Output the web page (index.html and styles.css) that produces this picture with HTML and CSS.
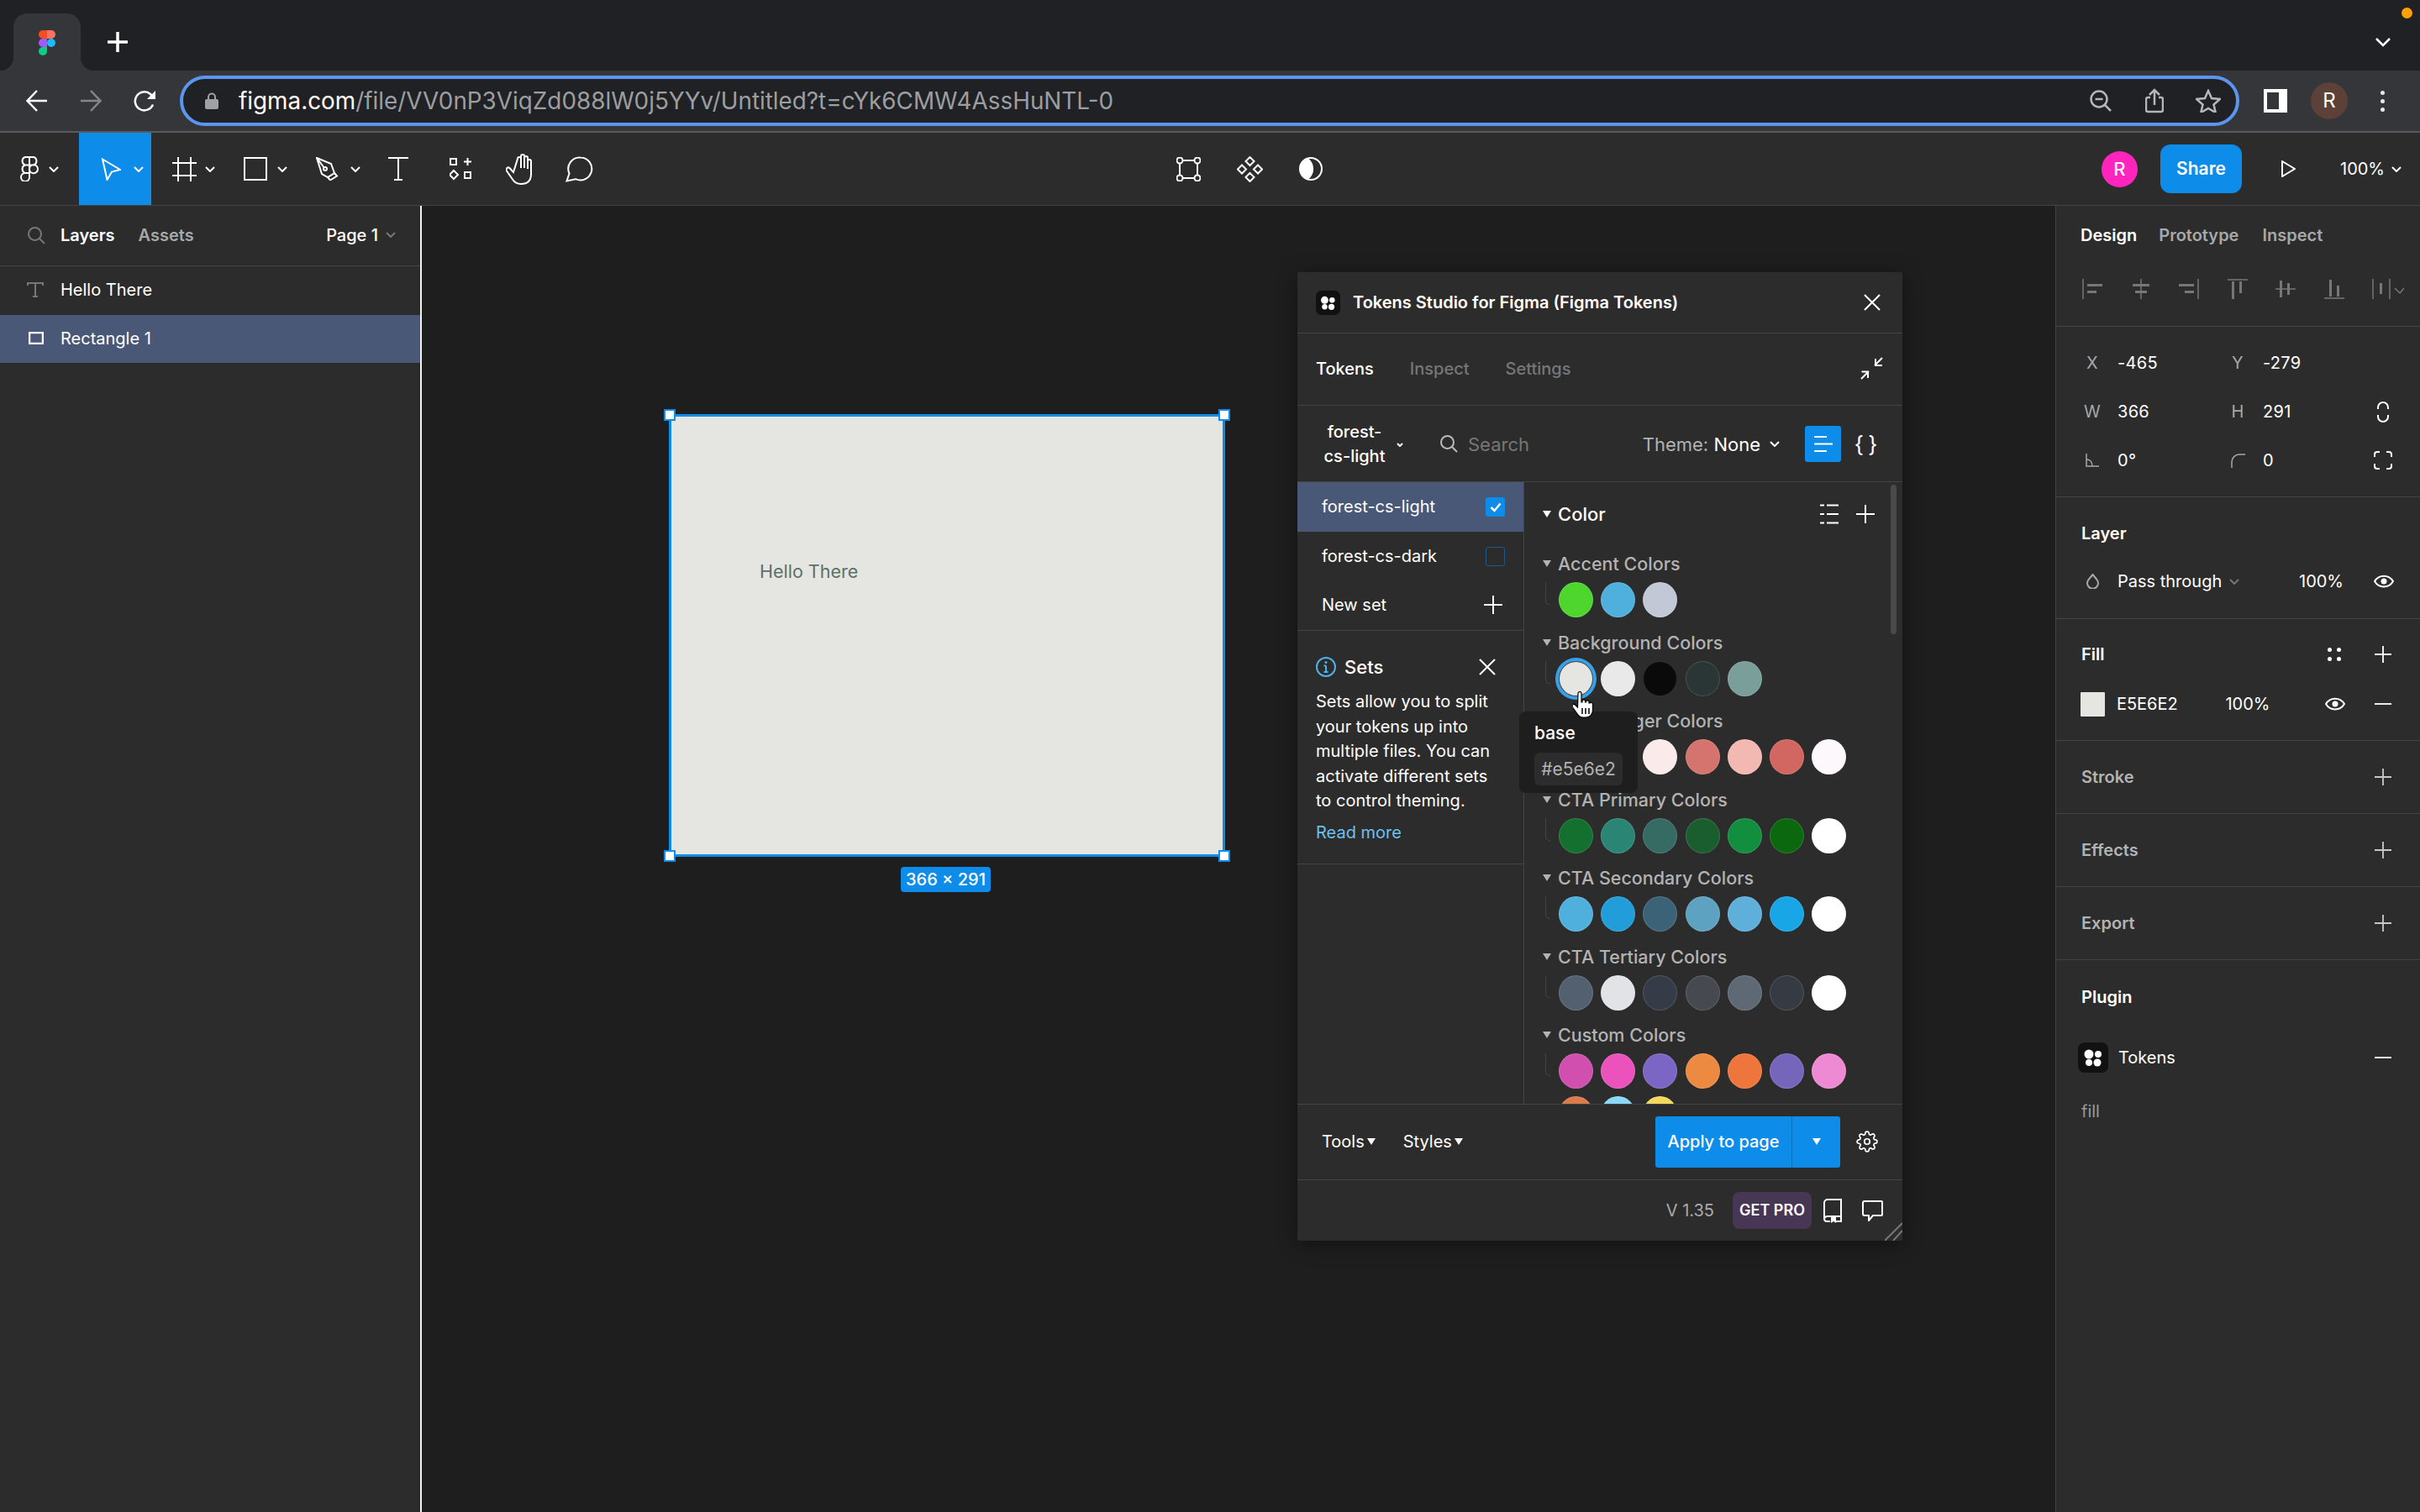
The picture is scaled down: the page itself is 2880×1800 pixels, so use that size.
FILE: index.html
```html
<!DOCTYPE html>
<html lang="en">
<head>
<meta charset="utf-8">
<title>Figma</title>
<link rel="stylesheet" href="styles.css">
</head>
<body>
<svg class="sprite" aria-hidden="true">
  <symbol id="plus" viewBox="0 0 22 22"><path d="M11 0v22M0 11h22"/></symbol>
  <symbol id="minus" viewBox="0 0 22 22"><path d="M0 11h22"/></symbol>
  <symbol id="close" viewBox="0 0 20 20"><path d="M1 1l18 18M19 1L1 19"/></symbol>
  <symbol id="chev" viewBox="0 0 12 7"><path d="M1 1l5 5 5-5"/></symbol>
  <symbol id="eye" viewBox="0 0 24 16"><path d="M1 8c5-8.500 17-8.500 22 0-5 8.500-17 8.500-22 0z"/><circle class="solid" cx="12" cy="8" r="3.500"/></symbol>
  <symbol id="tokens" viewBox="0 0 36 36"><rect class="blackbox" width="36" height="36" rx="8"/><circle class="whitefill" cx="13" cy="14" r="5.500"/><circle class="whitefill" cx="24" cy="14" r="4"/><circle class="whitefill" cx="13" cy="24" r="4"/><circle class="whitefill" cx="23" cy="24" r="4.500"/></symbol>
</svg>

<header class="tabstrip">
  <div class="tab">
    <svg class="fav" viewBox="0 0 20 30"><path fill="#f24e1e" d="M0 5a5 5 0 0 1 5-5h5v10H5a5 5 0 0 1-5-5"/><path fill="#ff7262" d="M10 0h5a5 5 0 0 1 0 10h-5z"/><path fill="#a259ff" d="M0 15a5 5 0 0 1 5-5h5v10H5a5 5 0 0 1-5-5"/><circle fill="#1abcfe" cx="15" cy="15" r="5"/><path fill="#0acf83" d="M0 25a5 5 0 0 1 5-5h5v5a5 5 0 0 1-10 0"/></svg>
  </div>
  <svg class="newtab" viewBox="0 0 24 24"><path d="M12 0v24M0 12h24"/></svg>
  <div class="tabstrip-right">
    <span class="orange-dot"></span>
    <svg class="tablist" viewBox="0 0 18 11"><path d="M1 1l8 8 8-8"/></svg>
  </div>
</header>

<nav class="navbar">
  <svg class="nav-icon back" viewBox="0 0 26 26"><path d="M25 13H2M13 1L1.500 13 13 25"/></svg>
  <svg class="nav-icon fwd" viewBox="0 0 26 26"><path d="M1 13h23M13 1l11.500 12L13 25"/></svg>
  <svg class="nav-icon reload" viewBox="0 0 27 26"><path d="M23 17.500A11 11 0 1 1 20 5l4 4"/><path class="solid" d="M26 1v10H16z"/></svg>
  <div class="urlbar">
    <svg class="lock" viewBox="0 0 16 20"><path class="lockshackle" d="M4 9V5.500a4 4 0 0 1 8 0V9"/><rect class="lockbody" y="8" width="16" height="12" rx="2"/></svg>
    <span class="url"><span class="url-host">figma.com</span>/file/VV0nP3ViqZd088lW0j5YYv/Untitled?t=cYk6CMW4AssHuNTL-0</span>
    <svg class="url-icon zoomout" viewBox="0 0 26 26"><circle cx="11" cy="11" r="9.500"/><path d="M6.500 11h9M18 18l7 7"/></svg>
    <svg class="url-icon share" viewBox="0 0 22 30"><path d="M11 20V2M5 8l6-6 6 6M6 11H3a2 2 0 0 0-2 2v13a2 2 0 0 0 2 2h16a2 2 0 0 0 2-2V13a2 2 0 0 0-2-2h-3"/></svg>
    <svg class="url-icon star" viewBox="0 0 30 28"><path d="M15 2l4 9 10 1-7.500 6.500 2.200 9.500-8.700-5-8.700 5 2.200-9.500L1 12l10-1z"/></svg>
  </div>
  <svg class="sidepanel" viewBox="0 0 28 28"><rect class="whitefill" width="28" height="28"/><rect class="panelhole" x="4" y="4" width="14" height="20"/></svg>
  <span class="profile">R</span>
  <span class="kebab"><i></i><i></i><i></i></span>
</nav>

<div class="toolbar">
  <div class="tool tool-logo">
    <svg class="ti ti-logo" viewBox="0 0 22 30"><path d="M11 1H6a5 5 0 0 0 0 9.500h5zM11 1h5a5 5 0 0 1 0 9.500h-5zM11 10.500H6a5 5 0 0 0 0 9.500h5zM11 20H6a5 5 0 1 0 5 5zM21 15.200a5 5 0 1 1-10 0 5 5 0 0 1 10 0z"/></svg>
    <svg class="chev"><use href="#chev"/></svg>
  </div>
  <div class="tool tool-move">
    <svg class="ti ti-cursor" viewBox="0 0 24 27"><path d="M2 1.500L23 14l-10 2.500L7.500 26z"/></svg>
    <svg class="chev"><use href="#chev"/></svg>
  </div>
  <div class="tool tool-frame">
    <svg class="ti ti-frame" viewBox="0 0 29 29"><path d="M7 0v29M22 0v29M0 7h29M0 22h29"/></svg>
    <svg class="chev"><use href="#chev"/></svg>
  </div>
  <div class="tool tool-rect">
    <svg class="ti ti-rect" viewBox="0 0 28 28"><rect x="1" y="1" width="26" height="26"/></svg>
    <svg class="chev"><use href="#chev"/></svg>
  </div>
  <div class="tool tool-pen">
    <svg class="ti ti-pen" viewBox="0 0 28 28"><path d="M1 1l17 7 4 11-8 5-7-4zM1 1l9 12M14 24l3 3.500 8-5-3-3.500"/><circle cx="11" cy="14" r="2"/></svg>
    <svg class="chev"><use href="#chev"/></svg>
  </div>
  <div class="tool tool-text">
    <svg class="ti ti-t" viewBox="0 0 24 28"><path d="M0 1h24M12 1v26M7 27h10"/></svg>
  </div>
  <div class="tool tool-res">
    <svg class="ti ti-res" viewBox="0 0 27 27"><rect x="1" y="1" width="7" height="7"/><rect x="18" y="17" width="7" height="7"/><path d="M21.500 0v9M17 4.500h9M5 15l5 5-5 5-5-5z"/></svg>
  </div>
  <div class="tool tool-hand">
    <svg class="ti ti-hand" viewBox="0 0 32 37"><path d="M9 22l-4.500-5a2.500 2.500 0 0 0-3.500 3.500l7 10c2.500 4 5 5.500 10 5.500 8 0 12-4 12-12V9a2 2 0 0 0-4 0v9V5a2 2 0 0 0-4 0v12V3a2 2 0 0 0-4 0v14V6a2 2 0 0 0-4 0z"/></svg>
  </div>
  <div class="tool tool-comment">
    <svg class="ti ti-comment" viewBox="0 0 33 31"><path d="M18 1.500a13.500 13.500 0 1 1-6 25.700L1.500 29.500l3-9A13.500 13.500 0 0 1 18 1.500z"/></svg>
  </div>
  <div class="center-tools">
    <svg class="ti ti-edit" viewBox="0 0 29 29"><path d="M4 4h21v21H4z"/><circle class="darkfill" cx="4" cy="4" r="3.500"/><circle class="darkfill" cx="25" cy="4" r="3.500"/><circle class="darkfill" cx="4" cy="25" r="3.500"/><circle class="darkfill" cx="25" cy="25" r="3.500"/></svg>
    <svg class="ti ti-comp" viewBox="0 0 31 31"><path d="M15.500 1l5 5-5 5-5-5zM6 10.500l5 5-5 5-5-5zM25 10.500l5 5-5 5-5-5zM15.500 20l5 5-5 5-5-5z"/></svg>
    <svg class="ti ti-contrast" viewBox="0 0 28 28"><circle cx="14" cy="14" r="13"/><path class="solid" d="M11 1.400a13 13 0 0 0 0 25.200 16 16 0 0 0 0-25.200z"/></svg>
  </div>
  <div class="right-tools">
    <span class="avatar">R</span>
    <span class="share-btn">Share</span>
    <svg class="ti ti-play" viewBox="0 0 17 20"><path d="M1 1l15 9-15 9z"/></svg>
    <span class="zoom-val">100%</span>
    <svg class="chev"><use href="#chev"/></svg>
  </div>
</div>

<main class="workspace">
  <aside class="left">
    <div class="left-head">
      <svg class="lh-search" viewBox="0 0 21 21"><circle cx="8.500" cy="8.500" r="7.500"/><path d="M14 14l6 6"/></svg>
      <span class="lh-active">Layers</span>
      <span class="lh-dim">Assets</span>
      <span class="lh-page">Page 1</span>
      <svg class="chev chev-dim"><use href="#chev"/></svg>
    </div>
    <div class="layer">
      <svg class="layer-t" viewBox="0 0 20 18"><path d="M0 1h20M10 1v16M7 17h6M1 1v3M19 1v3"/></svg>
      <span>Hello There</span>
    </div>
    <div class="layer layer-sel">
      <svg class="layer-r" viewBox="0 0 18 15"><rect x="1" y="1" width="16" height="13"/></svg>
      <span>Rectangle 1</span>
    </div>
  </aside>

  <section class="canvas">
    <div class="frame">
      <span class="frame-text">Hello There</span>
      <i class="handle h-tl"></i><i class="handle h-tr"></i><i class="handle h-bl"></i><i class="handle h-br"></i>
      <span class="dims">366 × 291</span>
    </div>

    <div class="plugin">
      <div class="pl-head">
        <svg class="pl-logo"><use href="#tokens"/></svg>
        <span class="pl-title">Tokens Studio for Figma (Figma Tokens)</span>
        <svg class="ic-close"><use href="#close"/></svg>
      </div>
      <div class="pl-tabs">
        <span class="pl-tab-on">Tokens</span>
        <span class="pl-tab">Inspect</span>
        <span class="pl-tab">Settings</span>
        <svg class="pl-collapse" viewBox="0 0 27 27"><path d="M26 1L17 10M18 2v8h8M1 26l9-9M1.500 17.500H9V25"/></svg>
      </div>
      <div class="pl-filter">
        <span class="pl-setname">forest-<br>cs-light</span>
        <svg class="mini-chev" viewBox="0 0 8 5"><path d="M1 1l3 3 3-3"/></svg>
        <svg class="pl-search" viewBox="0 0 21 21"><circle cx="8.500" cy="8.500" r="7.500"/><path d="M14 14l6 6"/></svg>
        <span class="pl-search-text">Search</span>
        <span class="pl-theme">Theme: <b>None</b></span>
        <svg class="chev pl-theme-chev"><use href="#chev"/></svg>
        <span class="pl-viewbtn"><svg viewBox="0 0 23 20"><path d="M1 1h15M1 9.500h22M1 18h15"/></svg></span>
        <span class="pl-braces">{ }</span>
      </div>
      <div class="pl-body">
        <div class="sets">
          <div class="set set-on"><span>forest-cs-light</span><span class="cb cb-on"><svg viewBox="0 0 14 12"><path d="M1.500 6l4 4 7-8.500"/></svg></span></div>
          <div class="set"><span>forest-cs-dark</span><span class="cb"></span></div>
          <div class="set set-new"><span>New set</span><svg class="ic-plus"><use href="#plus"/></svg></div>
          <div class="setinfo">
            <div class="setinfo-head">
              <svg class="info" viewBox="0 0 24 24"><circle cx="12" cy="12" r="11"/><path d="M12 10.500V18M9.500 18h5M9.500 10.500H12"/><circle class="bluefill" cx="12" cy="6.500" r="1.500"/></svg>
              <span>Sets</span>
              <svg class="ic-close"><use href="#close"/></svg>
            </div>
            <p class="setinfo-text">Sets allow you to split your tokens up into multiple files. You can activate different sets to control theming.</p>
            <span class="readmore">Read more</span>
          </div>
        </div>
        <div class="tokens">
          <div class="tok-head">
            <i class="tri"></i><span>Color</span>
            <svg class="tok-list" viewBox="0 0 22 24"><path d="M0 1.500h5M8 1.500h14M0 12h5M8 12h14M0 22.500h5M8 22.500h14"/></svg>
            <svg class="ic-plus"><use href="#plus"/></svg>
          </div>
          <div class="group"><div class="group-title"><i class="tri"></i>Accent Colors</div><div class="swatches">
            <i class="sw" style="background:#4fd62e"></i><i class="sw" style="background:#4fb0de"></i><i class="sw" style="background:#c2c8d6"></i>
          </div></div>
          <div class="group"><div class="group-title"><i class="tri"></i>Background Colors</div><div class="swatches">
            <i class="sw sw-hover" style="background:#e5e6e2"></i><i class="sw" style="background:#e9e9e9"></i><i class="sw" style="background:#0a0a0a"></i><i class="sw" style="background:#2a3535"></i><i class="sw" style="background:#7a9e9a"></i>
          </div></div>
          <div class="group"><div class="group-title"><i class="tri"></i>CTA Danger Colors</div><div class="swatches">
            <i class="sw" style="background:#d5736f"></i><i class="sw" style="background:#f2b9b3"></i><i class="sw" style="background:#faeaea"></i><i class="sw" style="background:#d5736f"></i><i class="sw" style="background:#f2b9b3"></i><i class="sw" style="background:#d26660"></i><i class="sw" style="background:#fdf8fb"></i>
          </div></div>
          <div class="group"><div class="group-title"><i class="tri"></i>CTA Primary Colors</div><div class="swatches">
            <i class="sw" style="background:#13702f"></i><i class="sw" style="background:#2a8574"></i><i class="sw" style="background:#356b63"></i><i class="sw" style="background:#1a5e30"></i><i class="sw" style="background:#128f3e"></i><i class="sw" style="background:#0c680f"></i><i class="sw" style="background:#ffffff"></i>
          </div></div>
          <div class="group"><div class="group-title"><i class="tri"></i>CTA Secondary Colors</div><div class="swatches">
            <i class="sw" style="background:#4fb0de"></i><i class="sw" style="background:#219dd9"></i><i class="sw" style="background:#3c6277"></i><i class="sw" style="background:#5ea2c1"></i><i class="sw" style="background:#5eb0da"></i><i class="sw" style="background:#18a6e6"></i><i class="sw" style="background:#ffffff"></i>
          </div></div>
          <div class="group"><div class="group-title"><i class="tri"></i>CTA Tertiary Colors</div><div class="swatches">
            <i class="sw" style="background:#536070"></i><i class="sw" style="background:#e2e3e7"></i><i class="sw" style="background:#363c47"></i><i class="sw" style="background:#46494f"></i><i class="sw" style="background:#5e6975"></i><i class="sw" style="background:#363b43"></i><i class="sw" style="background:#ffffff"></i>
          </div></div>
          <div class="group"><div class="group-title"><i class="tri"></i>Custom Colors</div><div class="swatches">
            <i class="sw" style="background:#d14fae"></i><i class="sw" style="background:#ec52bc"></i><i class="sw" style="background:#7b66c6"></i><i class="sw" style="background:#ed8a42"></i><i class="sw" style="background:#ee763c"></i><i class="sw" style="background:#7566bc"></i><i class="sw" style="background:#ee8ad4"></i><i class="sw" style="background:#db7a4a"></i><i class="sw" style="background:#8cd8f8"></i><i class="sw" style="background:#f3d95e"></i>
          </div></div>
          <i class="scrollbar"></i>
        </div>
      </div>
      <div class="pl-foot">
        <span class="pl-menu">Tools<i class="tri tri-w"></i></span>
        <span class="pl-menu pl-menu-styles">Styles<i class="tri tri-w"></i></span>
        <div class="apply"><span class="apply-main">Apply to page</span><span class="apply-more"><i class="tri tri-w"></i></span></div>
        <svg class="gear" viewBox="0 0 24 24"><circle cx="12" cy="12" r="3"/><path d="M19.400 15a1.650 1.650 0 0 0 .33 1.820l.06.06a2 2 0 0 1 0 2.830 2 2 0 0 1-2.830 0l-.06-.06a1.650 1.650 0 0 0-1.820-.33 1.650 1.650 0 0 0-1 1.510V21a2 2 0 0 1-2 2 2 2 0 0 1-2-2v-.09A1.650 1.650 0 0 0 9 19.400a1.650 1.650 0 0 0-1.820.33l-.06.06a2 2 0 0 1-2.830 0 2 2 0 0 1 0-2.830l.06-.06a1.650 1.650 0 0 0 .33-1.820 1.650 1.650 0 0 0-1.510-1H3a2 2 0 0 1-2-2 2 2 0 0 1 2-2h.09A1.650 1.650 0 0 0 4.600 9a1.650 1.650 0 0 0-.33-1.820l-.06-.06a2 2 0 0 1 0-2.830 2 2 0 0 1 2.830 0l.06.06a1.650 1.650 0 0 0 1.820.33H9a1.650 1.650 0 0 0 1-1.510V3a2 2 0 0 1 2-2 2 2 0 0 1 2 2v.09a1.650 1.650 0 0 0 1 1.510 1.650 1.650 0 0 0 1.820-.33l.06-.06a2 2 0 0 1 2.830 0 2 2 0 0 1 0 2.830l-.06.06a1.650 1.650 0 0 0-.33 1.820V9a1.650 1.650 0 0 0 1.510 1H21a2 2 0 0 1 2 2 2 2 0 0 1-2 2h-.09a1.650 1.650 0 0 0-1.510 1z"/></svg>
      </div>
      <div class="pl-status">
        <span class="version">V 1.35</span>
        <span class="getpro">GET PRO</span>
        <svg class="book" viewBox="0 0 23 29"><path d="M1 24V5a4 4 0 0 1 4-4h16v20H5a4 4 0 0 0-4 3.500A3.500 3.500 0 0 0 5 27h3M15 27h6v-6"/><path class="solid" d="M9 22h6v7l-3-2-3 2z"/></svg>
        <svg class="bubble" viewBox="0 0 25 25"><path d="M3 1h20a1 1 0 0 1 1 1v15a1 1 0 0 1-1 1H13l-5 6v-6H3a2 2 0 0 1-2-2V3a2 2 0 0 1 2-2z"/></svg>
        <svg class="grip" viewBox="0 0 21 22"><path d="M0 22L21 1M10 22L21 10"/></svg>
      </div>

      <div class="tip">
        <div class="tip-name">base</div>
        <div class="tip-hex">#e5e6e2</div>
      </div>
      <svg class="hand-cursor" viewBox="0 0 26 32"><path d="M6 2.500a2 2 0 0 1 4 0V13h1V11a2 2 0 0 1 3.500 0v2h1v-1a2 2 0 0 1 3.500 0v2h1a2 2 0 0 1 3.500 1v7c0 5-3 9-8 9h-4c-3 0-5-2-7-5l-5-7a2 2 0 0 1 3-3l3 3z"/><path class="handlines" d="M11 20v7M15 20v7M19 20v7"/></svg>
    </div>
  </section>

  <aside class="right">
    <div class="r-tabs"><span class="r-active">Design</span><span class="r-dim">Prototype</span><span class="r-dim r-inspect">Inspect</span></div>
    <div class="r-align">
      <svg viewBox="0 0 24 24"><path d="M1 0v24"/><path class="bar" d="M6 6h18v3H6zM6 14h11v3H6z"/></svg>
      <svg viewBox="0 0 24 24"><path d="M12 0v24"/><path class="bar" d="M2 6h20v3H2zM5 14h14v3H5z"/></svg>
      <svg viewBox="0 0 24 24"><path d="M23 0v24"/><path class="bar" d="M0 6h18v3H0zM7 14h11v3H7z"/></svg>
      <svg viewBox="0 0 24 24"><path d="M0 1h24"/><path class="bar" d="M5 3h3v21H5zM14 3h3v14h-3z"/></svg>
      <svg viewBox="0 0 24 24"><path d="M0 12h24"/><path class="bar" d="M5 2h3v20H5zM14 5h3v14h-3z"/></svg>
      <svg viewBox="0 0 24 24"><path d="M0 23h24"/><path class="bar" d="M6 1h3v20H6zM15 8h3v13h-3z"/></svg>
      <svg class="dist" viewBox="0 0 38 24"><path d="M1 0v24M21 0v24M27 11l6 6 5-6"/><path class="bar" d="M9 5h3v13H9z"/></svg>
    </div>
    <div class="r-props">
      <span class="p-label">X</span><span class="p-val">-465</span><span class="p-label">Y</span><span class="p-val">-279</span><span></span>
      <span class="p-label">W</span><span class="p-val">366</span><span class="p-label">H</span><span class="p-val">291</span>
      <svg class="p-link" viewBox="0 0 14 25"><path d="M1 9V7a6 6 0 0 1 12 0v2M1 16v2a6 6 0 0 0 12 0v-2"/></svg>
      <svg class="p-ang" viewBox="0 0 16 16"><path d="M1 0v15h15M1 7c4 0 7 3 7 8"/></svg><span class="p-val">0°</span>
      <svg class="p-rad" viewBox="0 0 17 17"><path d="M1 17V10a9 9 0 0 1 9-9h7"/></svg><span class="p-val">0</span>
      <svg class="p-corners" viewBox="0 0 22 22"><path d="M1 7V4a3 3 0 0 1 3-3h3M15 1h3a3 3 0 0 1 3 3v3M21 15v3a3 3 0 0 1-3 3h-3M7 21H4a3 3 0 0 1-3-3v-3"/></svg>
    </div>
    <section class="sec sec-layer">
      <h3 class="sec-title">Layer</h3>
      <div class="sec-row">
        <svg class="r-drop" viewBox="0 0 15 18"><path d="M7.500 1L12 6.500a6.500 6.500 0 1 1-9 0z"/></svg>
        <span class="r-blend">Pass through</span>
        <svg class="chev chev-dim r-blend-chev"><use href="#chev"/></svg>
        <span class="r-opacity">100%</span>
        <svg class="r-eye"><use href="#eye"/></svg>
      </div>
    </section>
    <section class="sec sec-fill">
      <div class="sec-line">
        <h3 class="sec-title">Fill</h3>
        <svg class="r-dots" viewBox="0 0 16 16"><circle class="solid" cx="2.500" cy="2.500" r="2.500"/><circle class="solid" cx="13.500" cy="2.500" r="2.500"/><circle class="solid" cx="2.500" cy="13.500" r="2.500"/><circle class="solid" cx="13.500" cy="13.500" r="2.500"/></svg>
        <svg class="r-plus"><use href="#plus"/></svg>
      </div>
      <div class="sec-row sec-row-fill">
        <i class="r-swatch"></i>
        <span class="r-hex">E5E6E2</span>
        <span class="r-fillop">100%</span>
        <svg class="r-eye r-eye-fill"><use href="#eye"/></svg>
        <svg class="r-plus r-minus"><use href="#minus"/></svg>
      </div>
    </section>
    <section class="sec sec-simple"><h3 class="sec-title dim">Stroke</h3><svg class="r-plus r-plus-dim"><use href="#plus"/></svg></section>
    <section class="sec sec-simple"><h3 class="sec-title dim">Effects</h3><svg class="r-plus r-plus-dim"><use href="#plus"/></svg></section>
    <section class="sec sec-simple"><h3 class="sec-title dim">Export</h3><svg class="r-plus r-plus-dim"><use href="#plus"/></svg></section>
    <section class="sec sec-plugin">
      <h3 class="sec-title">Plugin</h3>
      <div class="plugin-row">
        <svg class="r-tokens"><use href="#tokens"/></svg>
        <span class="r-tokens-name">Tokens</span>
        <svg class="r-plus r-minus-w"><use href="#minus"/></svg>
      </div>
      <div class="r-fillname">fill</div>
    </section>
  </aside>
</main>
</body>
</html>
```

FILE: styles.css
```css
* { box-sizing: border-box; }
html, body { margin: 0; padding: 0; }
body {
  width: 2880px; height: 1800px; overflow: hidden;
  display: flex; flex-direction: column;
  background: #1e1e1e; color: #fff;
  font: 400 20px/28px Inter, "Noto Sans", sans-serif;
}
i { display: block; font-style: normal; }
svg { display: block; fill: none; stroke: currentColor; stroke-width: 2; flex: none; }
.sprite { width: 0; height: 0; position: absolute; }
.solid { fill: currentColor; stroke: none; }
.whitefill { fill: #fff; stroke: none; }
.blackbox { fill: #111; stroke: none; }
.darkfill { fill: #2c2c2c; }
.bluefill { fill: #4fb0ea; stroke: none; }
h3 { margin: 0; font: inherit; }

/* browser tabs */
.tabstrip { height: 84px; background: #202124; display: flex; padding-top: 16px; flex: none; }
.tab { width: 80px; height: 68px; margin-left: 16px; background: #35363a; border-radius: 16px 16px 0 0; padding: 20px 0 0 30px; position: relative; }
.tab::before, .tab::after { content: ""; position: absolute; bottom: 0; width: 16px; height: 16px; }
.tab::before { left: -16px; background: radial-gradient(circle at 0 0, #202124 16px, #35363a 16.5px); }
.tab::after { right: -16px; background: radial-gradient(circle at 100% 0, #202124 16px, #35363a 16.5px); }
.fav { width: 20px; height: 30px; stroke: none; }
.newtab { width: 24px; height: 24px; margin: 22px 0 0 32px; stroke-width: 3.500; }
.tabstrip-right { margin-left: auto; width: 60px; position: relative; }
.orange-dot { position: absolute; right: 9px; top: -7px; width: 13px; height: 13px; border-radius: 50%; background: #ff9f0a; }
.tablist { width: 18px; height: 11px; margin: 29px 0 0 7px; stroke-width: 2.500; }

/* browser nav */
.navbar { height: 74px; background: #35363a; border-bottom: 2px solid #5a5a5c; display: flex; align-items: center; flex: none; padding-left: 31px; color: #fff; }
.nav-icon { width: 26px; height: 26px; stroke-width: 2.500; }
.fwd { margin-left: 38px; color: #85878a; }
.reload { margin-left: 38px; width: 27px; }
.urlbar { width: 2451px; height: 60px; margin-left: 28px; border: 4px solid #5a95ee; border-radius: 30px; background: #202124; display: flex; align-items: center; padding-left: 26px; }
.lock { width: 16px; height: 20px; color: #a0a1a5; }
.lockshackle { stroke: #a0a1a5; }
.lockbody { fill: #a0a1a5; stroke: none; }
.url { margin-left: 24px; font-size: 27.850px; line-height: 36px; color: #9c9ea1; white-space: nowrap; flex: 1; }
.url-host { color: #fff; }
.url-icon { color: #b5b6b9; stroke-width: 2.500; }
.zoomout { width: 26px; height: 26px; }
.share { width: 22px; height: 30px; margin-left: 40px; }
.star { width: 30px; height: 28px; margin: 0 18px 0 38px; }
.sidepanel { width: 28px; height: 28px; margin-left: 29px; }
.panelhole { fill: #35363a; stroke: none; }
.profile { width: 44px; height: 44px; margin-left: 28px; border-radius: 50%; background: #5d4037; display: flex; align-items: center; justify-content: center; font-size: 24px; }
.kebab { margin-left: 39px; display: flex; flex-direction: column; gap: 5px; }
.kebab i { width: 5px; height: 5px; border-radius: 50%; background: #e8e9ea; }

/* figma toolbar */
.toolbar { height: 87px; background: #2c2c2c; border-bottom: 1px solid #444; display: flex; align-items: stretch; flex: none; }
.tool { display: flex; align-items: center; }
.chev { width: 12px; height: 7px; }
.ti { color: #fff; }
.tool-logo { width: 94px; padding-left: 24px; gap: 12px; }
.tool-move { width: 86px; padding-left: 26px; gap: 15px; background: #0d8ce9; }
.tool-frame { width: 85px; padding-left: 25px; gap: 10px; }
.tool-rect { width: 86px; padding-left: 25px; gap: 12px; }
.tool-pen { width: 87px; padding-left: 25px; gap: 13px; }
.tool-text { width: 72px; padding-left: 24px; }
.tool-res { width: 70px; padding-left: 25px; }
.tool-hand { width: 75px; padding-left: 22px; }
.tool-comment { width: 75px; padding-left: 18px; }
.ti-logo { width: 22px; height: 30px; }
.ti-cursor { width: 24px; height: 27px; }
.ti-frame { width: 29px; height: 29px; }
.ti-rect, .ti-pen { width: 28px; height: 28px; }
.ti-t { width: 24px; height: 28px; }
.ti-res { width: 27px; height: 27px; }
.ti-hand { width: 32px; height: 37px; }
.ti-comment { width: 33px; height: 31px; }
.center-tools { margin-left: 670px; display: flex; align-items: center; gap: 43px; }
.ti-edit { width: 29px; height: 29px; }
.ti-comp { width: 31px; height: 31px; }
.ti-contrast { width: 28px; height: 28px; }
.right-tools { margin-left: auto; padding-right: 22px; display: flex; align-items: center; }
.avatar { width: 43px; height: 43px; border-radius: 50%; background: #ff24bd; display: flex; align-items: center; justify-content: center; font-size: 22px; font-weight: 500; }
.share-btn { width: 97px; height: 58px; margin-left: 27px; border-radius: 12px; background: #0d8ce9; display: flex; align-items: center; justify-content: center; font-weight: 600; font-size: 21px; }
.ti-play { width: 17px; height: 20px; margin-left: 47px; }
.zoom-val { margin-left: 53px; width: 49px; white-space: nowrap; }
.right-tools .chev { margin-left: 12px; }

/* workspace */
.workspace { flex: 1; display: flex; min-height: 0; }
.left { width: 502px; flex: none; background: #2c2c2c; border-right: 2px solid #f0f0f0; }
.left-head { height: 72px; border-bottom: 1px solid #444; display: flex; align-items: center; padding: 0 0 2px 33px; }
.lh-search { width: 21px; height: 21px; color: #777; margin-top: 2px; }
.lh-active { margin-left: 18px; font-weight: 600; }
.lh-dim { margin-left: 28px; font-weight: 600; color: #a8a8a8; }
.lh-page { margin-left: auto; margin-right: 9px; font-weight: 500; }
.chev-dim { color: #777; }
.left-head .chev { margin-right: 29px; }
.layer { height: 58px; display: flex; align-items: center; padding: 0 0 2px 32px; gap: 20px; }
.layer-sel { height: 57px; background: #4a5878; }
.layer-t { width: 20px; height: 18px; color: #777; }
.layer-r { width: 18px; height: 15px; margin-left: 2px; margin-right: 0; stroke-width: 2.500; color: #fff; }

/* canvas */
.canvas { flex: 1; position: relative; background: #1e1e1e; overflow: hidden; }
.frame { position: absolute; left: 294px; top: 248px; width: 662px; height: 527px; background: #e5e6e2; border: 3px solid #0d8ce9; }
.frame-text { position: absolute; left: 105px; top: 170px; font-size: 21.500px; color: #5d7069; white-space: nowrap; }
.handle { position: absolute; width: 14px; height: 14px; background: #fff; border: 2px solid #0d8ce9; }
.h-tl { left: -9px; top: -9px; } .h-tr { right: -9px; top: -9px; } .h-bl { left: -9px; bottom: -9px; } .h-br { right: -9px; bottom: -9px; }
.dims { position: absolute; left: 273px; top: 536px; width: 107px; height: 30px; border-radius: 4px; background: #0d8ce9; display: flex; align-items: center; justify-content: center; font-size: 20px; font-weight: 500; white-space: nowrap; }

/* plugin window */
.plugin { position: absolute; left: 1042px; top: 79px; width: 720px; height: 1153px; background: #2c2c2c; border-radius: 2px; box-shadow: 0 4px 24px rgba(0,0,0,.45), 0 0 1px rgba(255,255,255,.1); display: flex; flex-direction: column; }
.pl-head { height: 73px; flex: none; border-bottom: 1px solid #444; display: flex; align-items: center; padding: 0 26px 0 22px; }
.pl-logo { width: 29px; height: 29px; }
.pl-title { margin-left: 15px; font-weight: 600; flex: 1; white-space: nowrap; }
.ic-close { width: 20px; height: 20px; }
.pl-tabs { height: 86px; flex: none; border-bottom: 1px solid #444; display: flex; align-items: center; padding: 0 23px 2px 22px; font-weight: 500; }
.pl-tab { color: #777; margin-left: 43px; }
.pl-tab-on { color: #fff; }
.pl-collapse { width: 27px; height: 27px; margin-left: auto; }
.pl-filter { height: 91px; flex: none; border-bottom: 1px solid #444; display: flex; align-items: center; padding: 1px 0 0 22px; }
.pl-setname { width: 92px; text-align: center; line-height: 29px; font-weight: 500; }
.mini-chev { width: 8px; height: 5px; margin-left: 4px; margin-top: 2px; }
.pl-search { width: 21px; height: 21px; margin-left: 44px; color: #bbb; }
.pl-search-text { margin-left: 12px; color: #777; font-size: 22px; }
.pl-theme { margin-left: auto; color: #b3b3b3; white-space: nowrap; font-size: 22px; }
.pl-theme b { font-weight: 400; color: #fff; }
.pl-theme-chev { margin-left: 11px; }
.pl-viewbtn { width: 43px; height: 43px; margin-left: 30px; border-radius: 3px; background: #0d8ce9; display: flex; align-items: center; justify-content: center; }
.pl-viewbtn svg { width: 23px; height: 20px; }
.pl-braces { width: 28px; margin: 0 30px 0 15px; font-size: 26px; text-align: center; white-space: nowrap; letter-spacing: -1px; }

.pl-body { height: 740px; flex: none; display: flex; min-height: 0; }
.sets { width: 270px; flex: none; border-right: 1px solid #444; }
.set { height: 59px; display: flex; align-items: center; justify-content: space-between; padding: 0 22px 2px 29px; font-weight: 400; }
.set-on { background: #4a5878; }
.cb { width: 23px; height: 23px; border: 1.500px solid #1a5a8f; border-radius: 3px; display: flex; align-items: center; justify-content: center; margin-top: 2px; }
.cb-on { background: #0d8ce9; border: 0; }
.cb svg { width: 14px; height: 12px; stroke-width: 2.500; }
.set-new { height: 58px; padding-right: 25px; }
.ic-plus { width: 22px; height: 22px; }
.setinfo { border-top: 1px solid #444; border-bottom: 1px solid #444; height: 279px; padding: 28px 30px 0 22px; margin-top: 0; }
.setinfo-head { display: flex; align-items: center; font-weight: 500; font-size: 22px; height: 29px; margin-right: -8px; }
.info { width: 24px; height: 24px; color: #4fb0ea; }
.setinfo-head span { margin-left: 10px; flex: 1; }
.setinfo-head .ic-close { margin-right: 11px; }
.setinfo-text { margin: 13px 0 0; font-size: 20px; line-height: 29.600px; }
.readmore { display: block; margin-top: 8px; color: #6ec0f0; font-size: 20px; }

.tokens { flex: 1; position: relative; overflow: hidden; padding-left: 22px; }
.tok-head { height: 82px; display: flex; align-items: center; font-weight: 500; padding: 0 33px 6px 0; font-size: 22px; }
.tok-head span { margin-left: 8px; flex: 1; }
.tri { width: 0; height: 0; border-left: 5px solid transparent; border-right: 5px solid transparent; border-top: 8px solid currentColor; flex: none; }
.tok-list { width: 22px; height: 24px; margin-right: 21px; }
.group { height: 93.500px; }
.group-title { height: 30px; display: flex; align-items: center; gap: 8px; font-weight: 500; font-size: 21.500px; color: #b3b3b3; }
.swatches { display: flex; flex-wrap: wrap; gap: 9px 9.200px; margin: 7px 0 0 19px; width: 360px; position: relative; }
.swatches::before { content: ""; position: absolute; left: -16px; top: 0; width: 5px; height: 26px; border-left: 1px solid #444; border-bottom: 1px solid #444; border-radius: 0 0 0 5px; }
.sw { width: 41px; height: 42px; border-radius: 50%; border: 1px solid rgba(255,255,255,.14); }
.sw-hover { outline: 4px solid #37a0e8; outline-offset: 0; border: 1px solid #444; }
.scrollbar { position: absolute; right: 7px; top: 3px; width: 7px; height: 178px; border-radius: 4px; background: #4a4a4a; }

.pl-foot { height: 91px; flex: none; border-top: 1px solid #444; border-bottom: 1px solid #444; display: flex; align-items: center; padding: 0 0 1px 29px; }
.pl-menu { display: flex; align-items: center; gap: 3px; font-weight: 400; font-size: 20px; }
.tri-w { color: #fff; }
.pl-menu-styles { margin-left: 33px; }
.apply { margin-left: auto; width: 220px; height: 61px; border-radius: 3px; background: #0d8ce9; display: flex; }
.apply-main { width: 163px; border-right: 1px solid #0a6fbd; display: flex; align-items: center; justify-content: center; font-weight: 500; font-size: 20px; white-space: nowrap; }
.apply-more { flex: 1; display: flex; align-items: center; justify-content: center; }
.gear { width: 26px; height: 26px; margin: 0 29px 0 19px; stroke-width: 1.600; }
.pl-status { height: 72px; flex: none; display: flex; align-items: center; padding-right: 23px; justify-content: flex-end; position: relative; }
.version { color: #aaa; font-size: 20px; margin-right: 22px; }
.getpro { width: 94px; height: 44px; border-radius: 8px; background: #483754; display: flex; align-items: center; justify-content: center; font-size: 18px; font-weight: 600; margin-right: 14px; white-space: nowrap; }
.book { width: 23px; height: 29px; margin-right: 23px; }
.bubble { width: 25px; height: 25px; }
.grip { width: 21px; height: 22px; color: #777; position: absolute; right: 0; bottom: 0; }

.tip { position: absolute; left: 264px; top: 523px; width: 141px; height: 97px; background: #1e1e1e; border-radius: 8px; padding: 12px 18px 0; }
.tip-name { font-weight: 500; font-size: 21px; height: 28px; }
.tip-hex { margin-top: 9px; width: 105px; height: 39px; border-radius: 6px; background: #2c2c2c; color: #b3b3b3; display: flex; align-items: center; justify-content: center; font-size: 21px; white-space: nowrap; }
.hand-cursor { position: absolute; left: 328px; top: 499px; width: 26px; height: 32px; fill: #fff; stroke: #000; stroke-width: 1.200; }
.handlines { fill: none; stroke: #000; stroke-width: 1.500; }

/* right panel */
.right { width: 434px; flex: none; background: #2c2c2c; border-left: 1px solid #444; }
.r-tabs { height: 70px; display: flex; align-items: center; padding-left: 29px; font-weight: 600; }
.r-active { color: #fff; }
.r-dim { color: #a8a8a8; margin-left: 26px; }
.r-inspect { margin-left: 28px; }
.r-align { height: 74px; border-bottom: 1px solid #444; display: flex; align-items: flex-start; padding: 17px 0 0 31px; gap: 33.500px; color: #777; }
.r-align svg { width: 24px; height: 24px; stroke-width: 1.500; }
.r-align .dist { width: 38px; }
.bar { fill: #777; stroke: none; }
.r-props { height: 203px; border-bottom: 1px solid #444; display: grid; grid-template-columns: 26px 17px 130px 26px 17px 119px 48px; grid-auto-rows: 58px; padding: 14px 0 0 30px; align-items: center; letter-spacing: .3px; }
.p-label { color: #a8a8a8; text-align: center; }
.p-val { grid-column: auto / span 2; color: #fff; margin-left: 17px; }
.p-link { width: 14px; height: 25px; justify-self: center; grid-column: 7; }
.p-ang { width: 16px; height: 16px; justify-self: center; color: #a8a8a8; stroke-width: 1.500; }
.p-rad { width: 17px; height: 17px; justify-self: center; color: #a8a8a8; stroke-width: 1.500; }
.p-corners { width: 22px; height: 22px; justify-self: center; grid-column: 7; }
.sec { border-bottom: 1px solid #444; padding-left: 30px; }
.sec-title { font-weight: 600; }
.sec-layer { height: 145px; }
.sec-layer > .sec-title { height: 86px; display: flex; align-items: center; }
.sec-row { height: 28px; display: flex; align-items: center; }
.r-drop { width: 15px; height: 18px; margin-left: 6px; color: #a8a8a8; }
.r-blend { margin-left: 22px; width: 120px; white-space: nowrap; }
.r-blend-chev { margin-left: 13px; }
.r-opacity { margin-left: 71px; width: 49px; }
.r-eye { width: 24px; height: 16px; margin-left: 40px; }
.sec-fill { height: 145px; }
.sec-line { height: 84px; display: flex; align-items: center; }
.sec-line .sec-title { flex: 1; }
.r-dots { width: 16px; height: 16px; color: #fff; margin-right: 40px; }
.r-plus { width: 20px; height: 20px; margin-right: 34px; }
.sec-row-fill { height: 34px; margin-left: -1px; }
.r-swatch { width: 29px; height: 29px; background: #e5e6e2; border-radius: 1px; }
.r-hex { margin-left: 14px; width: 130px; }
.r-fillop { width: 119px; }
.r-eye-fill { margin-left: 0; }
.r-minus { margin-left: 35px; }
.sec-simple { height: 87px; display: flex; align-items: center; justify-content: space-between; padding-bottom: 1px; }
.dim { color: #b3b3b3; }
.r-plus-dim { color: #c8c8c8; }
.sec-plugin { border: 0; padding-top: 30px; }
.plugin-row { display: flex; align-items: center; margin: 40px 0 0 -4px; height: 36px; }
.r-tokens { width: 36px; height: 36px; }
.r-tokens-name { margin-left: 12px; flex: 1; }
.r-fillname { margin-top: 32px; color: #999; }
```
